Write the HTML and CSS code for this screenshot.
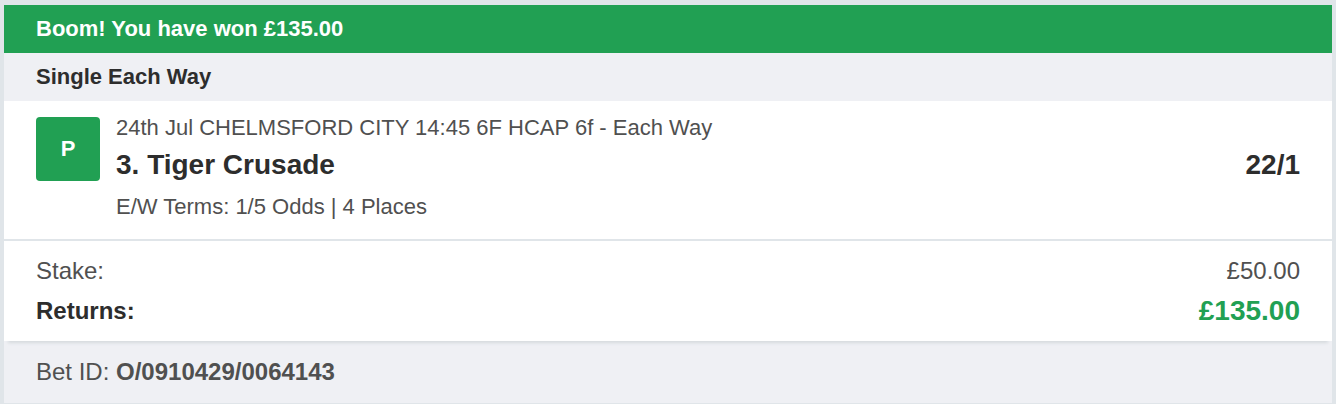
FILE: index.html
```html
<!DOCTYPE html>
<html lang="en">
<head>
  <meta charset="UTF-8" />
  <meta name="viewport" content="width=device-width, initial-scale=1" />
  <title>My Bets</title>
  <link rel="stylesheet" href="styles.css">
</head>
<body>

<div class="bet-card">
  <div class="win-banner">Boom! You have won £135.00</div>
  <div class="bet-type">Single Each Way</div>

  <div class="selection">
    <div class="status">P</div>
    <div class="details">
      <div class="event">24th Jul CHELMSFORD CITY 14:45 6F HCAP 6f - Each Way</div>
      <div class="runner">
        <span>3. Tiger Crusade</span>
        <span class="odds">22/1</span>
      </div>
      <div class="terms">E/W Terms: 1/5 Odds | 4 Places</div>
    </div>
  </div>

  <div class="totals">
    <div class="row">
      <span>Stake:</span>
      <span class="stake">£50.00</span>
    </div>
    <div class="row returns">
      <span>Returns:</span>
      <span class="amount">£135.00</span>
    </div>
  </div>

  <div class="bet-id">Bet ID: <b>O/0910429/0064143</b></div>
</div>

</body>
</html>
```
FILE: styles.css
```css
* { box-sizing: border-box; }
body {
  margin: 0;
  padding: 5px 4px 0;
  background: #e0e5e9;
  font-family: "Liberation Sans", Arial, sans-serif;
  font-size: 22px;
  color: #505050;
  overflow: hidden;
}
.bet-card { background: #eff0f4; }
.win-banner {
  height: 48px;
  padding: 0 32px;
  line-height: 47px;
  background: #21a053;
  color: #fff;
  font-weight: bold;
}
.bet-type {
  height: 48px;
  padding: 0 32px;
  line-height: 47px;
  color: #2d2d2d;
  font-weight: bold;
}
.selection {
  display: flex;
  gap: 16px;
  height: 140px;
  padding: 16px 32px 0;
  background: #fff;
  border-bottom: 2px solid #e0e5e9;
}
.status {
  width: 64px;
  height: 64px;
  line-height: 63px;
  background: #21a053;
  border-radius: 4px;
  color: #fff;
  font-weight: bold;
  text-align: center;
}
.details { flex: 1; }
.event { line-height: 21px; }
.runner {
  display: flex;
  justify-content: space-between;
  line-height: 53px;
  color: #2d2d2d;
  font-size: 28px;
  font-weight: bold;
}
.terms { line-height: 31px; }
.totals {
  height: 100px;
  padding: 10px 32px 0;
  background: #fff;
  box-shadow: 0 6px 3px -4px #d6dade;
  font-size: 24px;
}
.row {
  display: flex;
  justify-content: space-between;
  line-height: 40px;
}
.returns {
  color: #2d2d2d;
  font-weight: bold;
}
.amount {
  color: #21a053;
  font-size: 28px;
}
.bet-id {
  height: 62px;
  padding: 0 32px;
  line-height: 62px;
  font-size: 24px;
}
```
